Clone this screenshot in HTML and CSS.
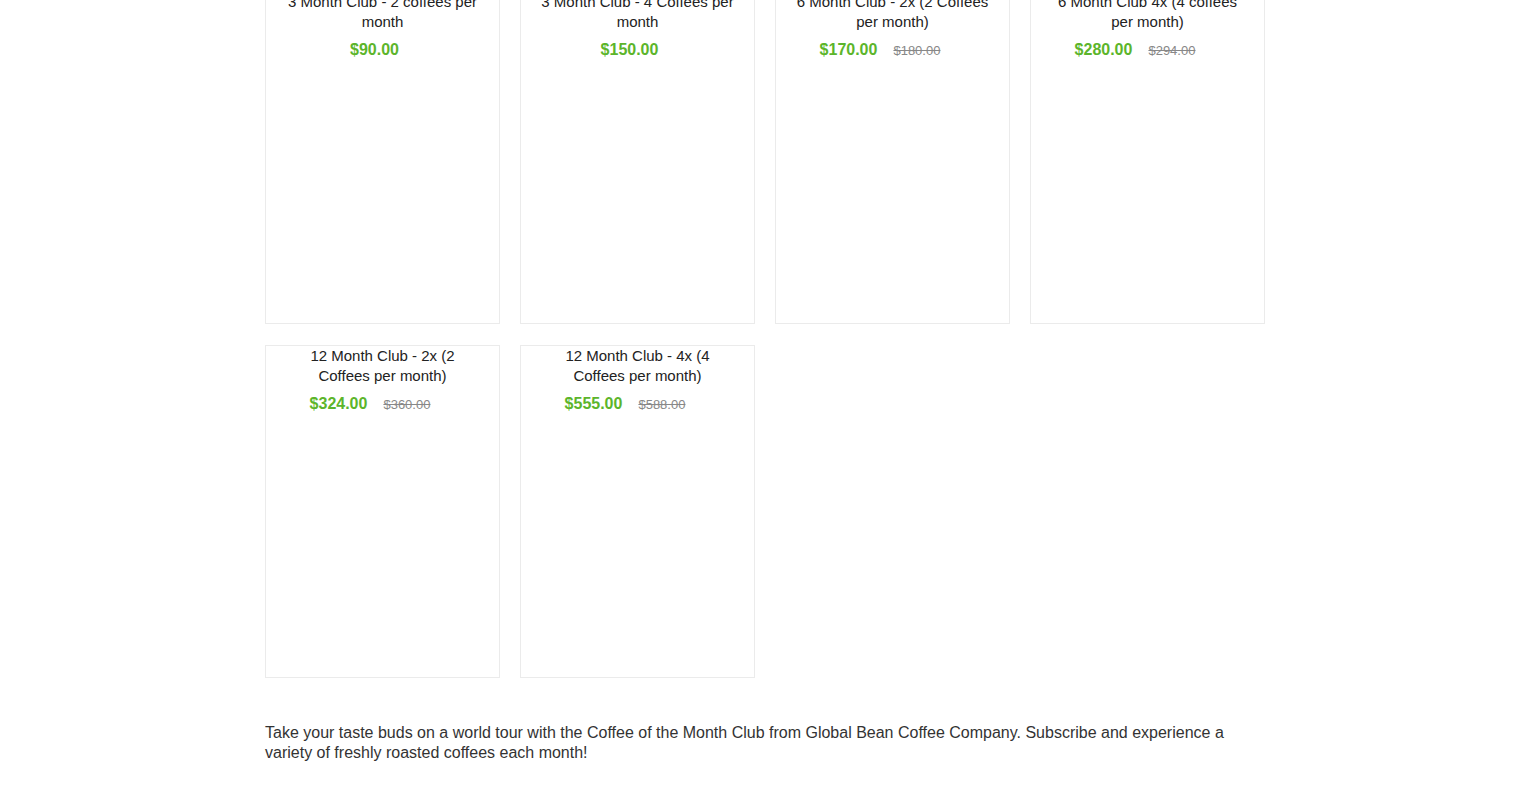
FILE: index.html
```html
<!DOCTYPE html>
<html>
<head>
<meta charset="utf-8">
<link rel="stylesheet" href="styles.css">
</head>
<body>
<main class="wrap">
  <section class="grid">
    <div class="card">
      <div class="title">3 Month Club - 2 coffees per month</div>
      <div class="prices"><span class="price">$90.00</span></div>
    </div>
    <div class="card">
      <div class="title">3 Month Club - 4 Coffees per month</div>
      <div class="prices"><span class="price">$150.00</span></div>
    </div>
    <div class="card">
      <div class="title">6 Month Club - 2x (2 Coffees per month)</div>
      <div class="prices"><span class="price">$170.00</span><span class="old">$180.00</span></div>
    </div>
    <div class="card">
      <div class="title">6 Month Club 4x (4 coffees per month)</div>
      <div class="prices"><span class="price">$280.00</span><span class="old">$294.00</span></div>
    </div>
    <div class="card">
      <div class="title">12 Month Club - 2x (2 Coffees per month)</div>
      <div class="prices"><span class="price">$324.00</span><span class="old">$360.00</span></div>
    </div>
    <div class="card">
      <div class="title">12 Month Club - 4x (4 Coffees per month)</div>
      <div class="prices"><span class="price">$555.00</span><span class="old">$588.00</span></div>
    </div>
  </section>
  <p class="desc">Take your taste buds on a world tour with the Coffee of the Month Club from Global Bean Coffee Company. Subscribe and experience a variety of freshly roasted coffees each month!</p>
</main>
</body>
</html>
```

FILE: styles.css
```css
html, body {
  margin: 0;
  padding: 0;
  background: #fff;
}
body {
  font-family: "Liberation Sans", Arial, sans-serif;
  color: #222;
}
.wrap {
  width: 1000px;
  margin: -9px auto 0;
}
.grid {
  display: grid;
  grid-template-columns: repeat(4, 235px);
  column-gap: 20px;
  row-gap: 21px;
}
.card {
  box-sizing: border-box;
  height: 333px;
  border: 1px solid #ebebeb;
  padding: 0 20px;
  text-align: center;
}
.title {
  font-size: 15px;
  line-height: 20px;
  color: #222;
}
.prices {
  margin-top: 8px;
  line-height: 20px;
  white-space: nowrap;
}
.price {
  font-size: 16px;
  font-weight: bold;
  color: #5cb52b;
  margin-right: 16px;
}
.old {
  font-size: 13px;
  color: #888;
  text-decoration: line-through;
  margin-right: 25px;
}
.desc {
  margin: 45px 0 0;
  font-size: 16px;
  line-height: 20px;
  color: #333;
}
```
